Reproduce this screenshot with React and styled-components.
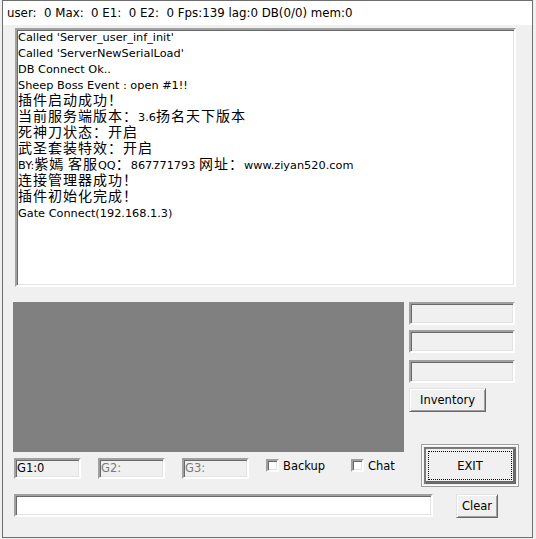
import React from 'react';
import styled, { createGlobalStyle, css } from 'styled-components';

const GlobalStyle = createGlobalStyle`
  html, body {
    margin: 0;
    padding: 0;
    background: #f0f0f0;
  }
  body {
    font-family: "DejaVu Sans", Tahoma, sans-serif;
    font-size: 11px;
    color: #000;
  }
`;

// classic win32 bevels
const sunken = css`
  box-sizing: border-box;
  border: 2px solid;
  border-color: #a0a0a0 #ffffff #ffffff #a0a0a0;
  box-shadow: inset 1px 1px 0 #696969, inset -1px -1px 0 #e3e3e3;
`;

const raised = css`
  box-sizing: border-box;
  border: 1px solid;
  border-color: #e3e3e3 #696969 #696969 #e3e3e3;
  box-shadow: inset 1px 1px 0 #ffffff, inset -1px -1px 0 #a0a0a0;
  background: #f0f0f0;
  font-family: inherit;
  font-size: 11.5px;
  color: #000;
  padding: 0;
  cursor: pointer;
`;

const Window = styled.div`
  box-sizing: border-box;
  margin-left: 2px;
  width: 531px;
  height: 538px;
  border: 1px solid #6e6e6e;
  background: #f0f0f0;
  display: flex;
  flex-direction: column;
`;

const StatusBar = styled.div`
  height: 24px;
  line-height: 24px;
  background: #fff;
  padding-left: 4px;
  font-size: 11.8px;
  white-space: pre;
`;

const Body = styled.div`
  padding: 3px 0 0 10px;
`;

const LogBox = styled.div`
  ${sunken};
  margin-left: 2px;
  width: 501px;
  height: 259px;
  background: #fff;
  padding-left: 1px;
  overflow: hidden;
`;

const LogLine = styled.div`
  height: 16px;
  line-height: 16px;
  font-size: 11.3px;
  white-space: pre;
`;

// small line-height keeps the CJK run inside the 16px line box
const Cjk = styled.span`
  font-family: "Noto Sans CJK SC", sans-serif;
  font-size: 14px;
  letter-spacing: 1px;
  line-height: 10px;
`;

const Middle = styled.div`
  display: flex;
  margin-top: 15px;
`;

const LeftCol = styled.div`
  width: 391px;
  display: flex;
  flex-direction: column;
`;

const MapPanel = styled.div`
  width: 391px;
  height: 150px;
  background: #808080;
`;

const GRow = styled.div`
  display: flex;
  align-items: flex-start;
  gap: 17px;
  margin-top: 6px;
  margin-left: 1px;
`;

const GBox = styled.div`
  ${sunken};
  width: 67px;
  height: 21px;
  line-height: 17px;
  padding-left: 1px;
  font-size: 11.5px;
  color: ${(p) => (p.$dim ? '#7a7a7a' : '#000')};
`;

const CheckLabel = styled.label`
  display: flex;
  align-items: center;
  gap: 4px;
  width: ${(p) => (p.$w ? `${p.$w}px` : 'auto')};
  height: 13px;
  margin-top: 1px;
  font-size: 11.5px;
`;

const CheckBox = styled.span`
  ${sunken};
  flex: none;
  width: 13px;
  height: 13px;
  background: #fff;
`;

const RightCol = styled.div`
  display: flex;
  flex-direction: column;
  align-items: flex-start;
  margin-left: 5px;
`;

const SideField = styled.div`
  ${sunken};
  width: 106px;
  height: 23px;
  margin-top: ${(p) => p.$gap || 0}px;
`;

const Button = styled.button`
  ${raised};
  width: ${(p) => p.$w}px;
  height: 24px;
  margin-top: ${(p) => p.$gap || 0}px;
  margin-left: ${(p) => p.$left || 0}px;
`;

const ExitButton = styled.button`
  box-sizing: border-box;
  width: 98px;
  height: 43px;
  margin: 32px 0 0 12px;
  border: 1px solid #a0a0a0;
  box-shadow: inset 0 0 0 1px #fff, inset 0 0 0 2px #f0f0f0,
    inset 2px 2px 0 2px #7a7a7a, inset -3px -3px 0 2px #6a6a6a;
  background: #f0f0f0;
  outline: 1px dotted #000;
  outline-offset: -8px;
  font-family: inherit;
  font-size: 11.5px;
  padding: 0;
  color: #000;
`;

const BottomRow = styled.div`
  display: flex;
  margin-top: 7px;
`;

const CommandInput = styled.div`
  ${sunken};
  width: 419px;
  height: 23px;
  margin-left: 1px;
  background: #fff;
`;

const logLines = [
  "Called 'Server_user_inf_init'",
  "Called 'ServerNewSerialLoad'",
  'DB Connect Ok..',
  'Sheep Boss Event : open #1!!',
  '插件启动成功！',
  '当前服务端版本：3.6扬名天下版本',
  '死神刀状态：开启',
  '武圣套装特效：开启',
  'BY:紫嫣 客服QQ：867771793 网址：www.ziyan520.com',
  '连接管理器成功！',
  '插件初始化完成！',
  'Gate Connect(192.168.1.3)',
];

// split a line into latin and CJK runs, CJK runs get the bigger font
function renderLine(text) {
  const parts = text.split(/([\u3000-\u303f\u4e00-\u9fff\uff00-\uffef]+)/);
  return parts.map((part, i) =>
    i % 2 === 1 ? <Cjk key={i}>{part}</Cjk> : part
  );
}

export default function App() {
  return (
    <>
      <GlobalStyle />
      <Window>
        <StatusBar>{'user:  0 Max:  0 E1:  0 E2:  0 Fps:139 lag:0 DB(0/0) mem:0'}</StatusBar>
        <Body>
          <LogBox>
            {logLines.map((line, index) => (
              <LogLine key={index}>{renderLine(line)}</LogLine>
            ))}
          </LogBox>

          <Middle>
            <LeftCol>
              <MapPanel />
              <GRow>
                <GBox>G1:0</GBox>
                <GBox $dim>G2:</GBox>
                <GBox $dim>G3:</GBox>
                <CheckLabel $w={68}>
                  <CheckBox />
                  Backup
                </CheckLabel>
                <CheckLabel>
                  <CheckBox />
                  Chat
                </CheckLabel>
              </GRow>
            </LeftCol>
            <RightCol>
              <SideField />
              <SideField $gap={5} />
              <SideField $gap={7} />
              <Button $w={77} $gap={5}>Inventory</Button>
              <ExitButton>EXIT</ExitButton>
            </RightCol>
          </Middle>

          <BottomRow>
            <CommandInput />
            <Button $w={42} $left={23}>Clear</Button>
          </BottomRow>
        </Body>
      </Window>
    </>
  );
}
